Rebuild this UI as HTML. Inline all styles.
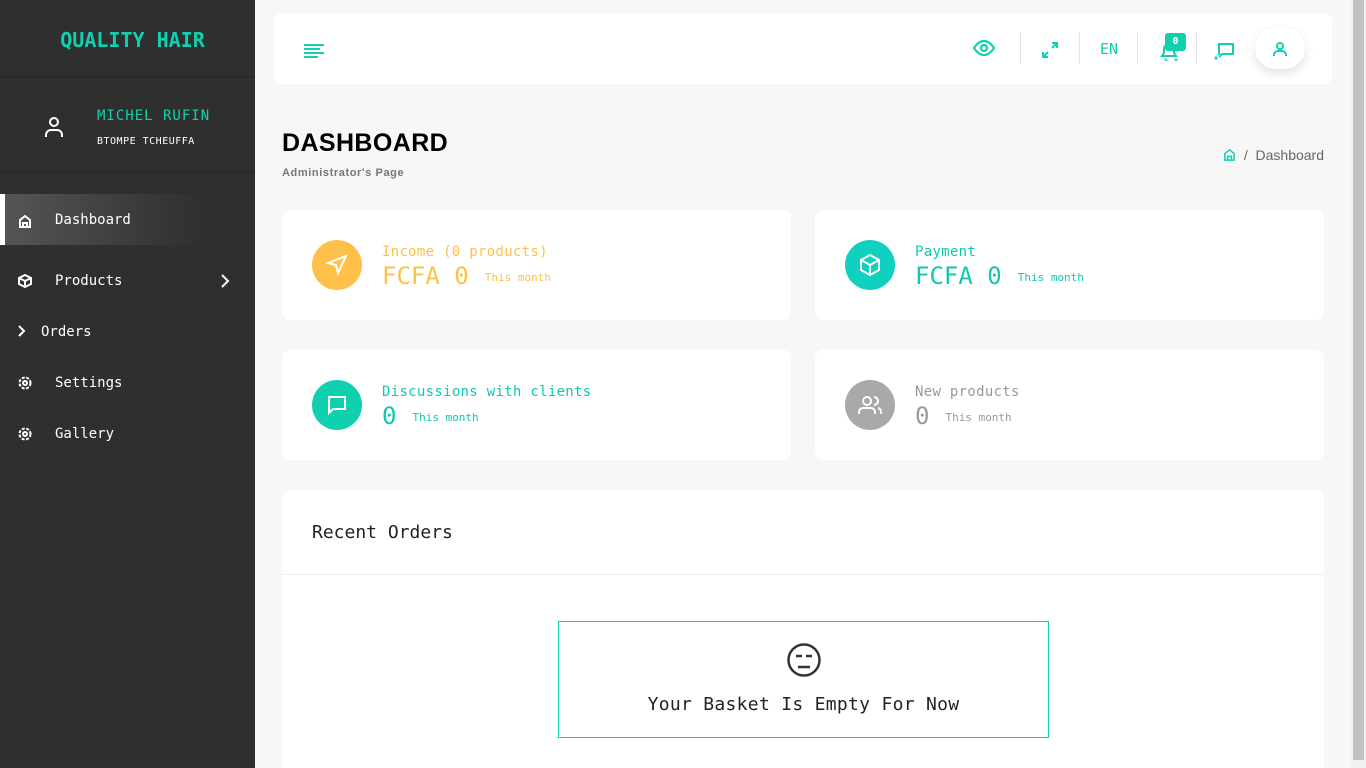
<!DOCTYPE html>
<html><head><meta charset="utf-8"><style>
*{box-sizing:border-box;margin:0;padding:0}
html,body{width:1366px;height:768px;overflow:hidden}
body{background:#f7f7f8;font-family:"DejaVu Sans Mono","Liberation Mono",monospace;position:relative}
.sb{position:absolute;left:0;top:0;width:255px;height:768px;background:#2f2f2f}
.logo{height:78px;text-align:center;line-height:80px;color:#10d0b0;font-weight:bold;font-size:20px;border-bottom:2px solid #2a2a2c;padding-left:10px}
.user{height:96px;position:relative;border-bottom:3px solid #2a2a2e}
.user svg{position:absolute;left:43px;top:37px}
.un{position:absolute;left:97px;top:30px;color:#10d0b0;font-size:14px;letter-spacing:1px}
.us{position:absolute;left:97px;top:58px;color:#fff;font-size:10px;letter-spacing:.5px}
.nav{position:absolute;left:0;width:255px;height:51px;color:#fff;font-size:14px;line-height:53px}
.nav svg{position:absolute;left:18px;top:19px}
.nav span{position:absolute;left:55px}
.act{background:linear-gradient(90deg,#555 0%,#3a3a3a 55%,#2f2f2f 80%);border-left:5px solid #fff}
.act span{left:50px}
.top{position:absolute;left:274px;top:13px;width:1058px;height:71px;background:#fff;border-radius:8px}
.scroll{position:absolute;left:1351px;top:0;width:15px;height:768px;background:#f1f1f1}
.scroll div{position:absolute;left:2px;top:0;width:11px;height:760px;background:#c1c1c1}
.card{position:absolute;background:#fff;border-radius:8px}
.ic{position:absolute;left:30px;top:30px;width:50px;height:50px;border-radius:50%}
.ic svg{position:absolute;left:13px;top:13px}
.t1{position:absolute;left:100px;top:34px;font-size:14px;letter-spacing:.3px}
.t2{position:absolute;left:100px;top:52px;font-size:24px}
.t2 small{font-size:11px;margin-left:16px;vertical-align:3px}
.sep{position:absolute;top:19px;width:1px;height:32px;background:#e6e6e6}
</style></head><body>
<div class="sb">
<div class="logo">QUALITY HAIR</div>
<div class="user"><svg width="22" height="24" viewBox="0 0 22 24" fill="none" stroke="#fff" stroke-width="2"><circle cx="11" cy="7" r="4"/><path d="M3 22v-2a5 5 0 015-5h6a5 5 0 015 5v2"/></svg>
<div class="un">MICHEL RUFIN</div><div class="us">BTOMPE TCHEUFFA</div></div>
<div class="nav act" style="top:194px"><svg style="left:13px;top:20px" width="14" height="14" viewBox="0 0 14 14" fill="none" stroke="#fff" stroke-width="2"><path d="M2 13V6l5-4 5 4v7zM5 13V9h4v4"/></svg><span>Dashboard</span></div>
<div class="nav" style="top:255px"><svg width="14" height="14" viewBox="0 0 14 14" fill="none" stroke="#fff" stroke-width="2"><path d="M7 1l6 3v6l-6 3-6-3V4zM1 4l6 3 6-3M7 7v6"/></svg><span>Products</span><svg style="left:220px;top:19px" width="10" height="14" viewBox="0 0 10 14" fill="none" stroke="#fff" stroke-width="2"><path d="M2 1l6 6-6 6"/></svg></div>
<div class="nav" style="top:306px"><svg style="top:19px" width="8" height="12" viewBox="0 0 8 12" fill="none" stroke="#fff" stroke-width="2"><path d="M1 1l5 5-5 5"/></svg><span style="left:41px">Orders</span></div>
<div class="nav" style="top:357px"><svg width="14" height="14" viewBox="0 0 14 14" fill="none" stroke="#fff" stroke-width="2"><circle cx="7" cy="7" r="2"/><circle cx="7" cy="7" r="5.5" stroke-dasharray="3 1.5"/></svg><span>Settings</span></div>
<div class="nav" style="top:408px"><svg width="14" height="14" viewBox="0 0 14 14" fill="none" stroke="#fff" stroke-width="2"><circle cx="7" cy="7" r="2"/><circle cx="7" cy="7" r="5.5" stroke-dasharray="3 1.5"/></svg><span>Gallery</span></div>
</div>

<div class="top">
<svg style="position:absolute;left:30px;top:31px" width="20" height="14" viewBox="0 0 20 14" stroke="#10d0b0" stroke-width="2"><path d="M0 1h20M0 5h16M0 9h20M0 13h14"/></svg>
<svg style="position:absolute;left:699px;top:27px" width="22" height="16" viewBox="0 0 22 16" fill="none" stroke="#10d0b0" stroke-width="2.2"><path d="M1 8s4-7 10-7 10 7 10 7-4 7-10 7S1 8 1 8z"/><circle cx="11" cy="8" r="3"/></svg>
<div class="sep" style="left:746px"></div>
<svg style="position:absolute;left:768px;top:29px" width="16" height="16" viewBox="0 0 16 16" fill="none" stroke="#10d0b0" stroke-width="2"><path d="M10 1h5v5M15 1l-5 5M6 15H1v-5M1 15l5-5"/></svg>
<div class="sep" style="left:805px"></div>
<div style="position:absolute;left:826px;top:27px;color:#10d0b0;font-size:15px">EN</div>
<div class="sep" style="left:863px"></div>
<svg style="position:absolute;left:885px;top:28px" width="20" height="20" viewBox="0 0 20 20" fill="none" stroke="#10d0b0" stroke-width="2"><path d="M3 15h14l-2-3V8a5 5 0 00-10 0v4z"/><circle cx="7" cy="19" r=".5"/><circle cx="17" cy="19" r=".5"/></svg>
<div style="position:absolute;left:891px;top:20px;width:21px;height:18px;background:#10d0b0;border-radius:3px;color:#fff;font-size:10px;text-align:center;line-height:18px;font-weight:bold">0</div>
<div class="sep" style="left:922px"></div>
<svg style="position:absolute;left:940px;top:29px" width="20" height="18" viewBox="0 0 20 18" fill="none" stroke="#10d0b0" stroke-width="2"><path d="M5 13V2h14v10H8l-3 3"/><circle cx="2" cy="16" r=".6"/></svg>
<div style="position:absolute;left:981px;top:15px;width:50px;height:41px;border-radius:21px;background:#fff;box-shadow:0 4px 10px rgba(0,0,0,.12)"><svg style="position:absolute;left:18px;top:13px" width="14" height="16" viewBox="0 0 14 16" fill="none" stroke="#10d0b0" stroke-width="2"><circle cx="7" cy="5" r="3"/><path d="M1 15v-1a4 4 0 014-4h4a4 4 0 014 4v1"/></svg></div>
</div>

<div style="position:absolute;left:282px;top:129px;font-family:'Liberation Sans',sans-serif;font-weight:bold;font-size:25px;color:#000;letter-spacing:.4px">DASHBOARD</div>
<div style="position:absolute;left:282px;top:167px;font-family:'Liberation Sans',sans-serif;font-weight:bold;font-size:11px;color:#777;letter-spacing:.6px">Administrator's Page</div>
<div style="position:absolute;right:42px;top:147px;font-family:'Liberation Sans',sans-serif;font-size:14px;color:#666"><svg width="13" height="13" viewBox="0 0 14 14" fill="none" stroke="#10d0b0" stroke-width="1.6" style="vertical-align:-1px"><path d="M2 13V6l5-4 5 4v7zM5 13V9h4v4"/></svg>&nbsp; /&nbsp; Dashboard</div>

<div class="card" style="left:282px;top:210px;width:509px;height:110px"><div class="ic" style="background:#ffc04a"><svg width="24" height="24" viewBox="0 0 24 24" fill="none" stroke="#fff" stroke-width="2"><path d="M21 3L3 10l8 2 2 8z"/></svg></div><div class="t1" style="color:#ffc04a">Income (0 products)</div><div class="t2" style="color:#ffc04a">FCFA 0<small>This month</small></div></div>
<div class="card" style="left:815px;top:210px;width:509px;height:110px"><div class="ic" style="background:#10d0c0"><svg width="24" height="24" viewBox="0 0 24 24" fill="none" stroke="#fff" stroke-width="2"><path d="M12 2l9 5v10l-9 5-9-5V7zM3 7l9 5 9-5M12 12v10"/></svg></div><div class="t1" style="color:#10c8b0">Payment</div><div class="t2" style="color:#10c8b0">FCFA 0<small>This month</small></div></div>
<div class="card" style="left:282px;top:350px;width:509px;height:110px"><div class="ic" style="background:#10d0b0"><svg width="24" height="24" viewBox="0 0 24 24" fill="none" stroke="#fff" stroke-width="2"><path d="M4 4h16v12H8l-4 4z"/></svg></div><div class="t1" style="color:#10c8b0">Discussions with clients</div><div class="t2" style="color:#10c8b0">0<small>This month</small></div></div>
<div class="card" style="left:815px;top:350px;width:509px;height:110px"><div class="ic" style="background:#a9a9a9"><svg width="24" height="24" viewBox="0 0 24 24" fill="none" stroke="#fff" stroke-width="2"><circle cx="9" cy="8" r="4"/><path d="M1 21v-2a4 4 0 014-4h8a4 4 0 014 4v2M16 4a4 4 0 010 8M23 21v-2a4 4 0 00-3-4"/></svg></div><div class="t1" style="color:#999">New products</div><div class="t2" style="color:#999">0<small>This month</small></div></div>

<div class="card" style="left:282px;top:490px;width:1042px;height:278px;border-radius:8px 8px 0 0">
<div style="position:absolute;left:30px;top:32px;font-size:18px;color:#222">Recent Orders</div>
<div style="position:absolute;left:0;top:84px;width:100%;height:1px;background:#eee"></div>
<div style="position:absolute;left:276px;top:131px;width:491px;height:117px;border:1px solid #10d0b0">
<svg style="position:absolute;left:227px;top:20px" width="36" height="36" viewBox="0 0 36 36" fill="none" stroke="#333" stroke-width="2.5"><circle cx="18" cy="18" r="15.5"/><path d="M10 14h6M20 14h6M12 25h12"/></svg>
<div style="position:absolute;left:0;width:100%;top:72px;text-align:center;font-size:18px;color:#222;letter-spacing:.3px">Your Basket Is Empty For Now</div></div>
</div>
<div class="scroll"><div></div></div>
</body></html>
